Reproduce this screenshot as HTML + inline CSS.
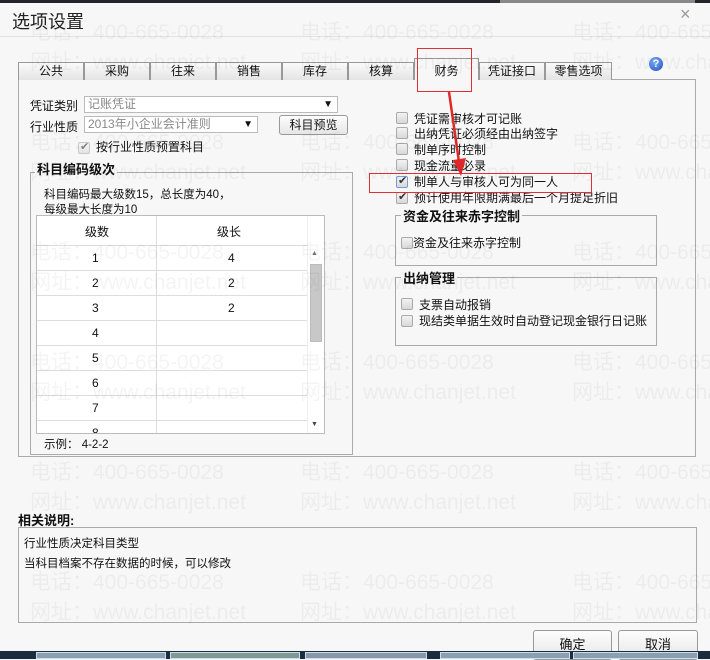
<!DOCTYPE html>
<html><head><meta charset="utf-8"><style>
*{margin:0;padding:0;box-sizing:border-box}
body{width:710px;height:659px;overflow:hidden;background:#f7f7f7;font-family:"Liberation Sans","Noto Sans CJK SC",sans-serif;font-size:12px;color:#111;position:relative}
.a{position:absolute;white-space:nowrap}
.wm{position:absolute;font-size:21px;color:rgba(0,0,0,0.045);white-space:nowrap;font-family:"Liberation Sans","Noto Sans CJK SC",sans-serif}
.tab{position:absolute;top:62px;height:18px;border:1px solid #999;border-bottom:none;background:linear-gradient(#fafafa,#e4e4e4);text-align:center;line-height:16px;font-size:12px}
.cb{position:absolute;width:12px;height:12px;border:1px solid #aaa;border-radius:2px;background:linear-gradient(#f2f2f2,#d8d8d8)}
.cb.c::after{content:"✔";position:absolute;left:1px;top:-3px;font-size:11px;color:#333}
.fs{position:absolute;border:1px solid #aaa}
.lg{position:absolute;background:#f7f7f7;font-weight:bold;font-size:13px;padding:0 2px}
.row{position:absolute;left:0;width:270px;height:25px;border-bottom:1px solid #ddd}
.row span{position:absolute;top:5px}
.btn{position:absolute;border:1px solid #999;border-radius:3px;background:linear-gradient(#fdfdfd,#e6e6e6);text-align:center;font-size:13px}
</style></head><body>
<div class="a" style="left:0;top:0;width:710px;height:3px;background:#22262b"></div>
<div class="a" style="left:500px;top:0;width:195px;height:3px;background:#888"></div>
<div class="a" style="left:12px;top:8px;font-size:18px;color:#222">选项设置</div>
<div class="a" style="left:680px;top:4px;font-size:18px;color:#999">×</div>
<div class="a" style="left:0;top:36px;width:710px;height:1px;background:#e2e2e2"></div>

<div class="a" style="left:18px;top:79px;width:678px;height:378px;border:1px solid #aaa;background:#f7f7f7"></div>
<div class="tab" style="left:18px;width:66px">公共</div>
<div class="tab" style="left:84px;width:66px">采购</div>
<div class="tab" style="left:150px;width:66px">往来</div>
<div class="tab" style="left:216px;width:66px">销售</div>
<div class="tab" style="left:282px;width:66px">库存</div>
<div class="tab" style="left:348px;width:66px">核算</div>
<div class="tab" style="left:414px;top:58px;height:22px;width:65px;background:#f7f7f7;line-height:24px">财务</div>
<div class="tab" style="left:479px;width:66px">凭证接口</div>
<div class="tab" style="left:545px;width:67px">零售选项</div>
<div class="a" style="left:649px;top:57px;width:14px;height:14px;border-radius:50%;background:radial-gradient(circle at 40% 35%,#7fb0ff,#1d4fb8);color:#fff;font-size:11px;font-weight:bold;text-align:center;line-height:14px">?</div>

<div class="a" style="left:30px;top:97px">凭证类别</div>
<div class="a" style="left:84px;top:96px;width:254px;height:17px;border:1px solid #bbb;background:#fff;color:#888;padding-left:3px;line-height:15px">记账凭证<span style="position:absolute;right:4px;color:#111;font-size:10px">▼</span></div>
<div class="a" style="left:30px;top:118px">行业性质</div>
<div class="a" style="left:84px;top:116px;width:174px;height:17px;border:1px solid #bbb;background:#fff;color:#888;padding-left:3px;line-height:15px">2013年小企业会计准则<span style="position:absolute;right:4px;color:#111;font-size:10px">▼</span></div>
<div class="btn" style="left:279px;top:115px;width:69px;height:20px;line-height:18px;font-size:12px">科目预览</div>
<div class="cb c" style="left:78px;top:142px;opacity:.6"></div>
<div class="a" style="left:96px;top:138px">按行业性质预置科目</div>

<div class="fs" style="left:30px;top:172px;width:323px;height:283px"></div>
<div class="lg" style="left:35px;top:159px">科目编码级次</div>
<div class="a" style="left:44px;top:186px;font-size:11.5px">科目编码最大级数15，总长度为40，</div>
<div class="a" style="left:44px;top:201px;font-size:11.5px">每级最大长度为10</div>
<div class="a" style="left:36px;top:215px;width:289px;height:219px;border:1px solid #bbb;background:#fff;overflow:hidden">
 <div class="row" style="top:0;height:30px"><span style="left:48px;top:7px">级数</span><span style="left:180px;top:7px">级长</span></div>
 <div class="row" style="top:30px"><span style="left:55px">1</span><span style="left:191px">4</span></div>
 <div class="row" style="top:55px"><span style="left:55px">2</span><span style="left:191px">2</span></div>
 <div class="row" style="top:80px"><span style="left:55px">3</span><span style="left:191px">2</span></div>
 <div class="row" style="top:105px"><span style="left:55px">4</span></div>
 <div class="row" style="top:130px"><span style="left:55px">5</span></div>
 <div class="row" style="top:155px"><span style="left:55px">6</span></div>
 <div class="row" style="top:180px"><span style="left:55px">7</span></div>
 <div class="row" style="top:205px"><span style="left:55px">8</span></div>
 <div style="position:absolute;left:119px;top:0;width:1px;height:219px;background:#ddd"></div>
 <div style="position:absolute;left:270px;top:0;width:18px;height:219px;background:#fff;border-left:1px solid #eee"></div>
 <div style="position:absolute;left:274px;top:34px;font-size:7px;color:#777">▲</div>
 <div style="position:absolute;left:273px;top:48px;width:12px;height:78px;background:#c8c8c8;border:1px solid #bbb"></div>
 <div style="position:absolute;left:274px;top:205px;font-size:7px;color:#444">▼</div>
</div>
<div class="a" style="left:44px;top:436px;font-size:11.5px">示例：&nbsp;4-2-2</div>

<div class="cb" style="left:396px;top:112px"></div><div class="a" style="left:414px;top:110px">凭证需审核才可记账</div>
<div class="cb" style="left:396px;top:127px"></div><div class="a" style="left:414px;top:125px">出纳凭证必须经由出纳签字</div>
<div class="cb" style="left:396px;top:143px"></div><div class="a" style="left:414px;top:141px">制单序时控制</div>
<div class="cb" style="left:396px;top:159px"></div><div class="a" style="left:414px;top:157px">现金流量必录</div>
<div class="cb c" style="left:396px;top:176px;border-color:#7a9ad6"></div><div class="a" style="left:414px;top:173px">制单人与审核人可为同一人</div>
<div class="cb c" style="left:396px;top:192px"></div><div class="a" style="left:414px;top:189px">预计使用年限期满最后一个月提足折旧</div>
<div class="a" style="left:369px;top:173px;width:223px;height:20px;border:1px solid #e03030"></div>
<div class="a" style="left:417px;top:48px;width:55px;height:44px;border:1px solid #e03030"></div>
<svg class="a" style="left:440px;top:90px" width="30" height="90"><line x1="9" y1="2" x2="19" y2="72" stroke="#e02828" stroke-width="2.5"/><polygon points="13,70 26,68 21,86" fill="#e02828"/></svg>

<div class="fs" style="left:395px;top:215px;width:262px;height:51px"></div>
<div class="lg" style="left:401px;top:206px">资金及往来赤字控制</div>
<div class="cb" style="left:401px;top:237px"></div><div class="a" style="left:413px;top:234px">资金及往来赤字控制</div>
<div class="fs" style="left:395px;top:277px;width:262px;height:69px"></div>
<div class="lg" style="left:401px;top:268px">出纳管理</div>
<div class="cb" style="left:401px;top:298px"></div><div class="a" style="left:419px;top:296px">支票自动报销</div>
<div class="cb" style="left:401px;top:315px"></div><div class="a" style="left:419px;top:312px">现结类单据生效时自动登记现金银行日记账</div>

<div class="a" style="left:18px;top:510px;font-weight:bold;font-size:13px">相关说明:</div>
<div class="a" style="left:18px;top:527px;width:679px;height:96px;border:1px solid #aaa"></div>
<div class="a" style="left:24px;top:535px;font-size:11.5px">行业性质决定科目类型</div>
<div class="a" style="left:24px;top:555px;font-size:11.5px">当科目档案不存在数据的时候，可以修改</div>

<div class="btn" style="left:533px;top:630px;width:79px;height:30px;line-height:28px">确定</div>
<div class="btn" style="left:618px;top:630px;width:80px;height:30px;line-height:28px">取消</div>
<div class="a" style="left:0;top:651px;width:710px;height:8px;background:#1c2e3e"></div>
<div class="a" style="left:36px;top:652px;width:130px;height:7px;background:#8aa0b0;border:1px solid #cde"></div>
<div class="a" style="left:170px;top:652px;width:130px;height:7px;background:#7f9a90;border:1px solid #cde"></div>
<div class="a" style="left:305px;top:652px;width:122px;height:7px;background:#8898a8;border:1px solid #cde"></div>
<div class="a" style="left:440px;top:652px;width:130px;height:7px;background:#8aa0b0;border:1px solid #cde"></div>
<div class="a" style="left:573px;top:652px;width:125px;height:7px;background:#8aa0b0;border:1px solid #cde"></div>

<div class="wm" style="left:30px;top:16px">电话：400-665-0028</div><div class="wm" style="left:300px;top:16px">电话：400-665-0028</div><div class="wm" style="left:572px;top:16px">电话：400-665-0028</div>
<div class="wm" style="left:30px;top:46px">网址：www.chanjet.net</div><div class="wm" style="left:300px;top:46px">网址：www.chanjet.net</div><div class="wm" style="left:572px;top:46px">网址：www.chanjet.net</div>
<div class="wm" style="left:30px;top:126px">电话：400-665-0028</div><div class="wm" style="left:300px;top:126px">电话：400-665-0028</div><div class="wm" style="left:572px;top:126px">电话：400-665-0028</div>
<div class="wm" style="left:30px;top:156px">网址：www.chanjet.net</div><div class="wm" style="left:300px;top:156px">网址：www.chanjet.net</div><div class="wm" style="left:572px;top:156px">网址：www.chanjet.net</div>
<div class="wm" style="left:30px;top:236px">电话：400-665-0028</div><div class="wm" style="left:300px;top:236px">电话：400-665-0028</div><div class="wm" style="left:572px;top:236px">电话：400-665-0028</div>
<div class="wm" style="left:30px;top:266px">网址：www.chanjet.net</div><div class="wm" style="left:300px;top:266px">网址：www.chanjet.net</div><div class="wm" style="left:572px;top:266px">网址：www.chanjet.net</div>
<div class="wm" style="left:30px;top:346px">电话：400-665-0028</div><div class="wm" style="left:300px;top:346px">电话：400-665-0028</div><div class="wm" style="left:572px;top:346px">电话：400-665-0028</div>
<div class="wm" style="left:30px;top:376px">网址：www.chanjet.net</div><div class="wm" style="left:300px;top:376px">网址：www.chanjet.net</div><div class="wm" style="left:572px;top:376px">网址：www.chanjet.net</div>
<div class="wm" style="left:30px;top:456px">电话：400-665-0028</div><div class="wm" style="left:300px;top:456px">电话：400-665-0028</div><div class="wm" style="left:572px;top:456px">电话：400-665-0028</div>
<div class="wm" style="left:30px;top:486px">网址：www.chanjet.net</div><div class="wm" style="left:300px;top:486px">网址：www.chanjet.net</div><div class="wm" style="left:572px;top:486px">网址：www.chanjet.net</div>
<div class="wm" style="left:30px;top:566px">电话：400-665-0028</div><div class="wm" style="left:300px;top:566px">电话：400-665-0028</div><div class="wm" style="left:572px;top:566px">电话：400-665-0028</div>
<div class="wm" style="left:30px;top:596px">网址：www.chanjet.net</div><div class="wm" style="left:300px;top:596px">网址：www.chanjet.net</div><div class="wm" style="left:572px;top:596px">网址：www.chanjet.net</div>
</body></html>
